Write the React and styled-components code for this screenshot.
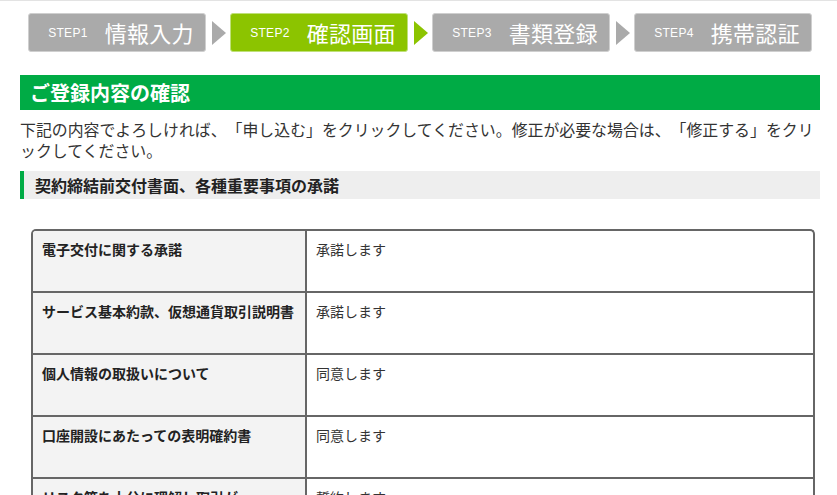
import React from 'react';
import styled, { createGlobalStyle } from 'styled-components';

const GlobalStyle = createGlobalStyle`
  body {
    margin: 0;
    background: #fff;
    font-family: "Noto Sans CJK JP", "Noto Sans", sans-serif;
    color: #333;
    text-spacing-trim: space-all;
  }
`;

const TopLine = styled.div`
  height: 1px;
  background: #e3e3e3;
`;

const Page = styled.div`
  width: 800px;
  margin-left: 20px;
`;

const StepNav = styled.ol`
  display: flex;
  align-items: center;
  list-style: none;
  margin: 12px 0 0;
  padding: 0 0 0 8px;
  height: 39px;
`;

const Step = styled.li`
  box-sizing: border-box;
  width: 178px;
  height: 39px;
  display: flex;
  align-items: center;
  justify-content: center;
  gap: 17px;
  padding-left: 8px;
  border: 1px solid ${p => (p.$active ? '#bfe07a' : '#cfcfcf')};
  border-radius: 3px;
  background: ${p => (p.$active ? '#8cc400' : '#aaaaaa')};
  color: #fff;
`;

const StepNo = styled.span`
  font-family: "Liberation Sans", Arial, sans-serif;
  font-size: 12px;
  letter-spacing: 0.3px;
  padding-top: 1px;
`;

const StepName = styled.span`
  font-size: 22px;
  line-height: 1;
  letter-spacing: 0.3px;
  margin-top: -2px;
`;

const Arrow = styled.span`
  width: 0;
  height: 0;
  margin: 0 4px 0 6px;
  border-top: 12px solid transparent;
  border-bottom: 12px solid transparent;
  border-left: 14px solid ${p => (p.$active ? '#8cc400' : '#aaaaaa')};
`;

const Title = styled.h1`
  margin: 23px 0 0;
  height: 35px;
  display: flex;
  align-items: center;
  padding-left: 10px;
  background: #00ab45;
  color: #fff;
  font-size: 20px;
  font-weight: bold;
`;

const Lead = styled.p`
  margin: 9px 0 0;
  font-size: 15.9px;
  line-height: 21px;
  color: #333;
`;

const SubTitle = styled.h2`
  margin: 10px 0 0;
  height: 28px;
  display: flex;
  align-items: center;
  padding-left: 11px;
  border-left: 4px solid #00ab45;
  background: #eeeeee;
  color: #222;
  font-size: 16px;
  font-weight: bold;
`;

const Table = styled.div`
  margin: 30px 5px 0 11px;
  border: 2px solid #666;
  border-bottom: none;
  border-radius: 5px 5px 0 0;
  overflow: hidden;
`;

const Row = styled.div`
  display: grid;
  grid-template-columns: 274px 1fr;
  height: 60px;
  border-top: ${p => (p.$first ? 'none' : '2px solid #666')};
`;

const Label = styled.div`
  box-sizing: border-box;
  padding: 8px 9px 0;
  background: #f3f3f3;
  border-right: 2px solid #666;
  font-size: 14px;
  font-weight: bold;
  line-height: 20px;
  color: #222;
`;

const Value = styled.div`
  padding: 8px 9px 0;
  font-size: 14px;
  line-height: 20px;
  color: #333;
`;

const steps = [
  { no: 'STEP1', name: '情報入力' },
  { no: 'STEP2', name: '確認画面', active: true },
  { no: 'STEP3', name: '書類登録' },
  { no: 'STEP4', name: '携帯認証' },
];

const rows = [
  { label: ['電子交付に関する承諾'], value: '承諾します' },
  { label: ['サービス基本約款、仮想通貨取引説明書'], value: '承諾します' },
  { label: ['個人情報の取扱いについて'], value: '同意します' },
  { label: ['口座開設にあたっての表明確約書'], value: '同意します' },
  { label: ['リスク等を十分に理解し取引が', '可能であること'], value: '誓約します' },
];

const App = () => {
  return (
    <>
      <GlobalStyle />
      <TopLine />
      <Page>
        <StepNav>
          {steps.map((s, i) => (
            <React.Fragment key={s.no}>
              {i > 0 && <Arrow $active={steps[i - 1].active} />}
              <Step $active={s.active}>
                <StepNo>{s.no}</StepNo>
                <StepName>{s.name}</StepName>
              </Step>
            </React.Fragment>
          ))}
        </StepNav>
        <Title>ご登録内容の確認</Title>
        <Lead>
          下記の内容でよろしければ、「申し込む」をクリックしてください。修正が必要な場合は、「修正する」をクリックしてください。
        </Lead>
        <SubTitle>契約締結前交付書面、各種重要事項の承諾</SubTitle>
        <Table>
          {rows.map((r, i) => (
            <Row key={r.value + i} $first={i === 0}>
              <Label>
                {r.label.map((l, j) => (
                  <React.Fragment key={l}>
                    {j > 0 && <br />}
                    {l}
                  </React.Fragment>
                ))}
              </Label>
              <Value>{r.value}</Value>
            </Row>
          ))}
        </Table>
      </Page>
    </>
  );
};

export default App;
